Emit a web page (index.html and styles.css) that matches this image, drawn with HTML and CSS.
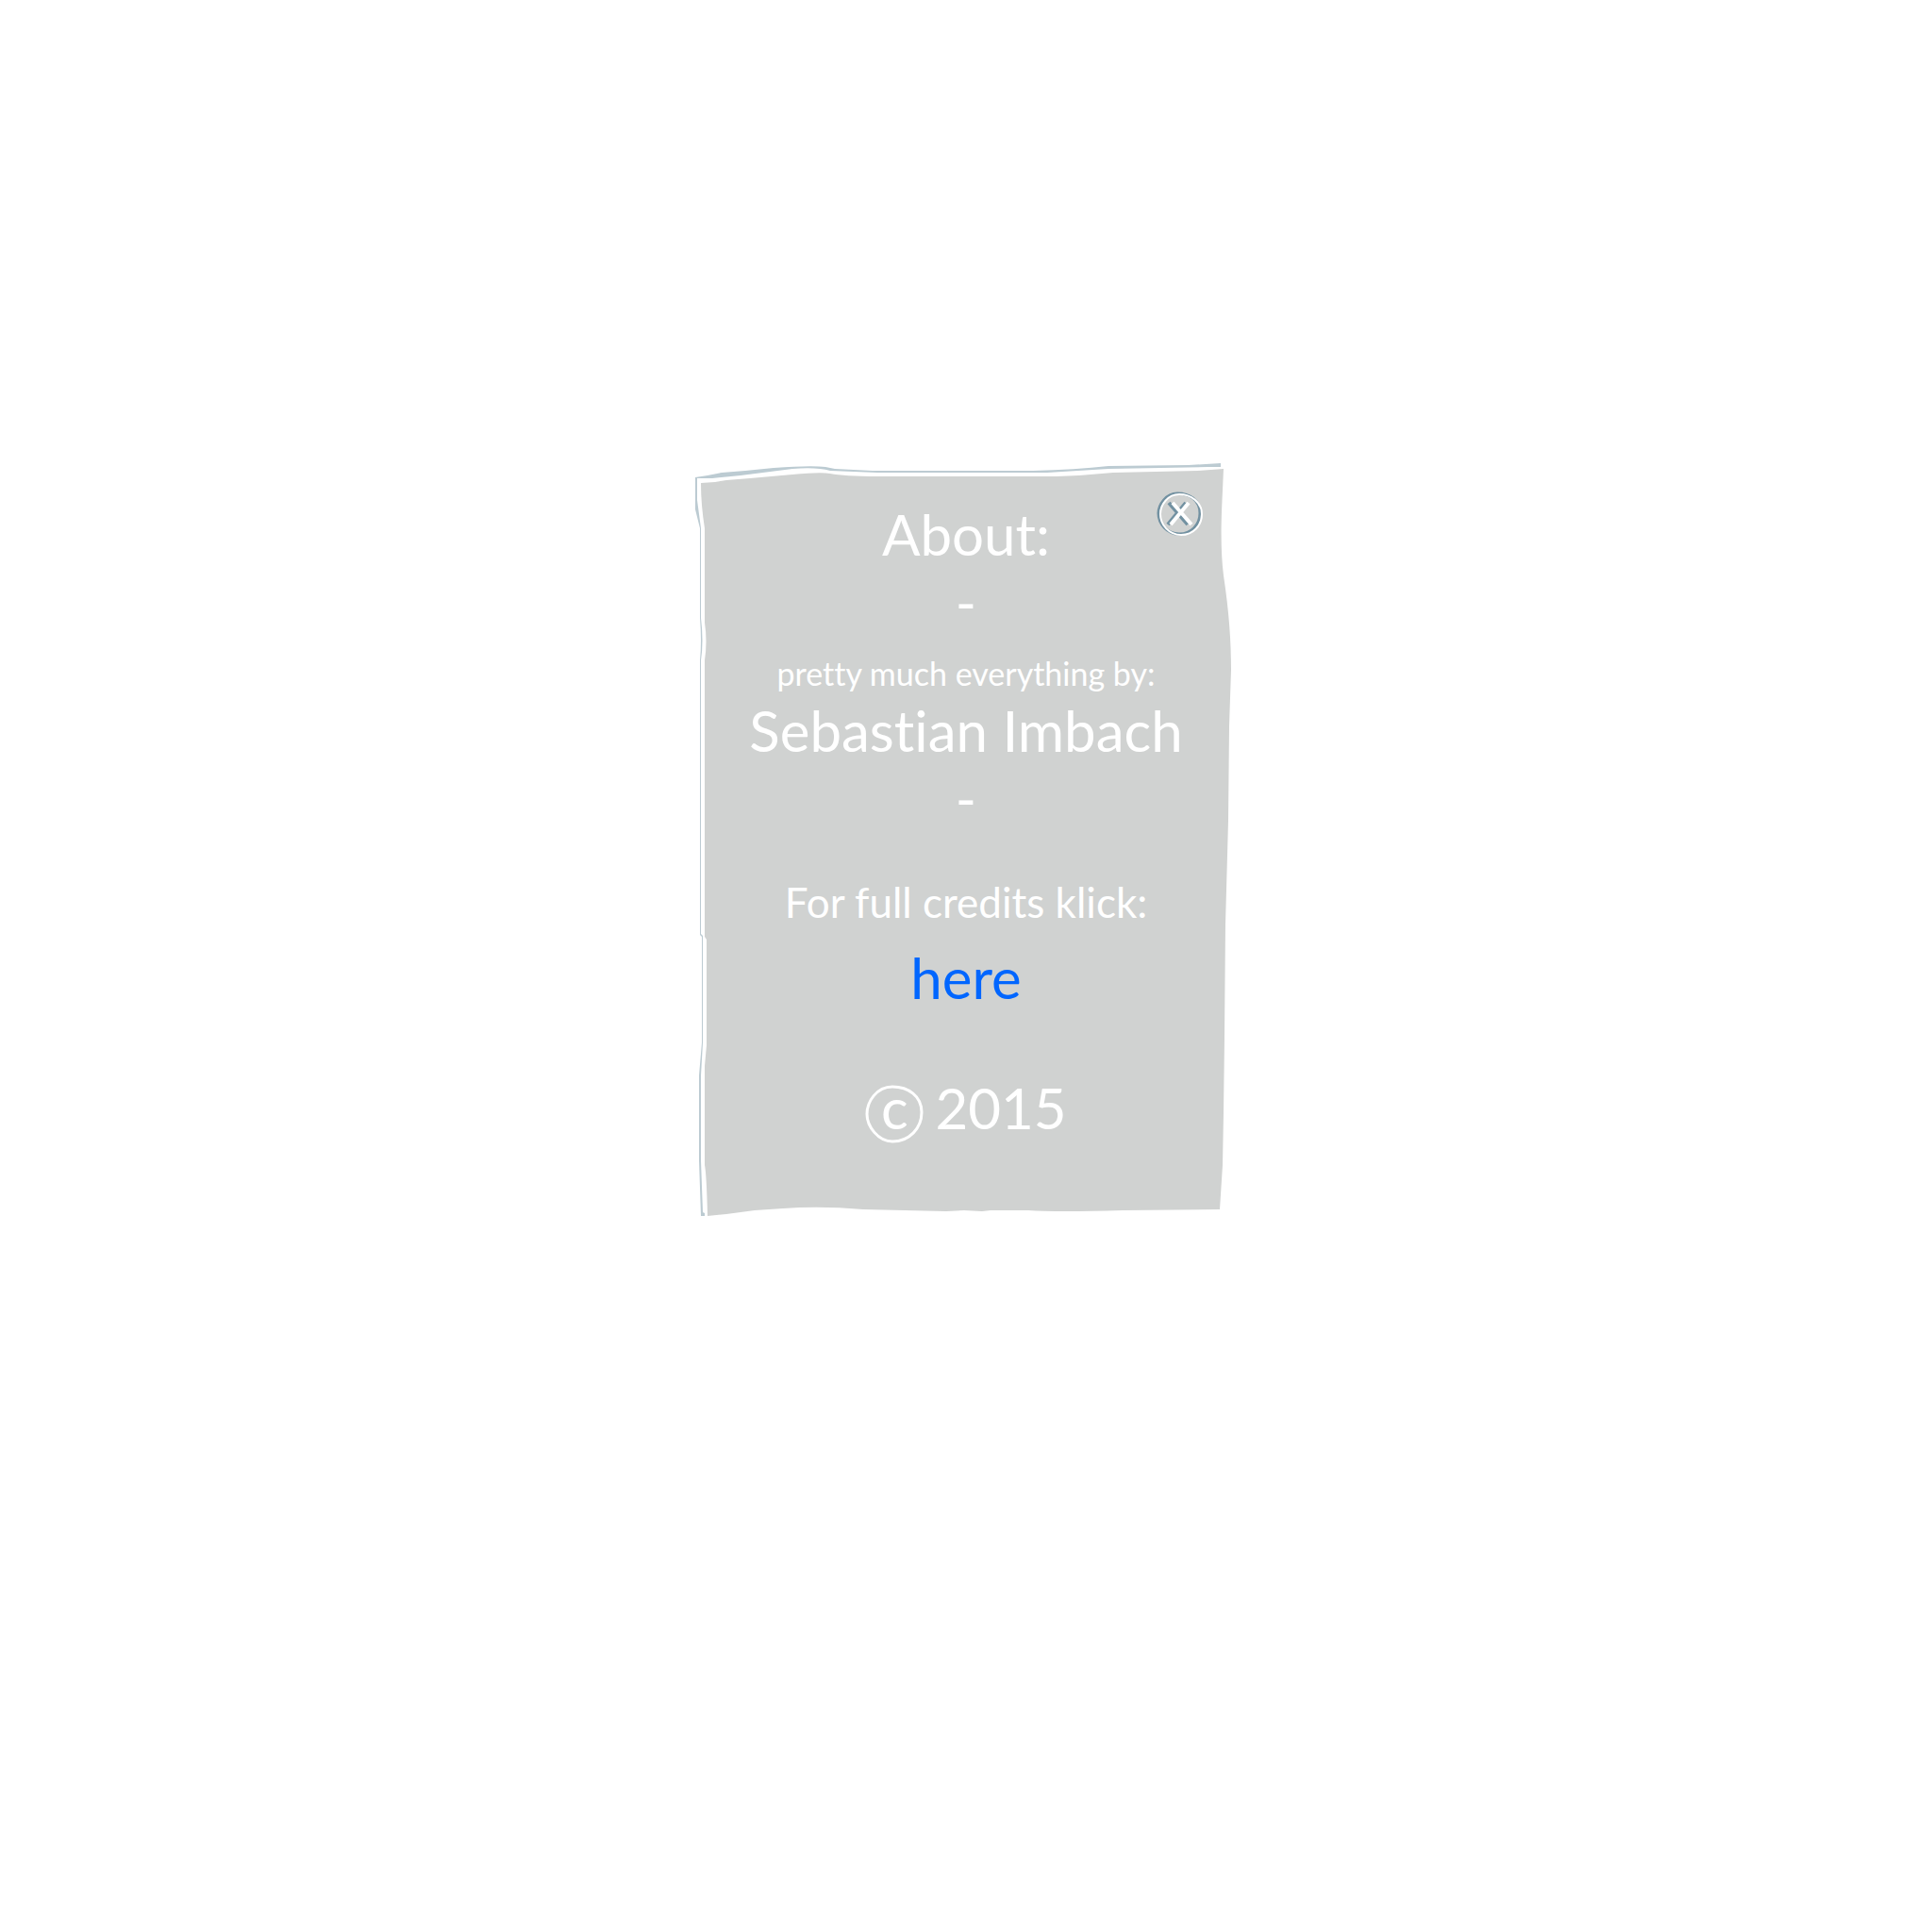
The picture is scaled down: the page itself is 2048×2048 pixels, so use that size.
FILE: index.html
```html
<!DOCTYPE html>
<html lang="en">
<head>
<meta charset="utf-8">
<meta name="viewport" content="width=device-width, initial-scale=1">
<title>About</title>
<link rel="stylesheet" href="styles.css">
</head>
<body>
<main class="panel">
  <svg class="paper" viewBox="736 490 576 800" preserveAspectRatio="none" aria-hidden="true">
    <path fill="#d0d2d1" d="M743 512 L758 511 L770 509 L795 507 L840 503 Q870 500 880 502 Q895 505 930 505 L1120 505 Q1150 504 1180 501 L1270 499 L1297 497 L1296 520 C1294 560 1294 585 1297 610 C1303 650 1305 680 1305 710 L1303 770 L1302 870 L1299 980 L1298 1100 L1297 1180 L1296 1235 L1293 1282 L1190 1283 Q1120 1285 1090 1283 L1050 1283 L1041 1284 L1022 1283 L1003 1284 L915 1282 Q870 1278 830 1281 L800 1283 L770 1287 L750 1289 Q749 1245 747 1235 L747 1130 L749 1108 L749 996 L747 993 L747 700 Q750 680 747 660 L747 560 Q743 535 743 512 Z"/>
    <path fill="#bccbd2" d="M737 506 L750 504 L765 501 L790 499 L820 496 Q860 493 875 495 L885 497 L925 499 L1095 499 Q1140 498 1175 494 L1260 493 L1294 491 L1294 495 L1280 495 L1175 497 L1110 501 L930 501 L880 499 Q866 495 840 497 L785 504 L755 507 L739 507 L739 530 L743 560 L743 655 Q746 680 743 700 L743 990 L745 992 L745 1105 L743 1140 L743 1230 L745 1285 L747 1286 L747 1289 L743 1289 L741 1230 L741 1140 L744 1105 L744 993 L742 991 L742 700 Q744 680 742 655 L742 560 L737 540 Z"/>
  </svg>
  <button class="close" type="button" aria-label="Close">
    <svg viewBox="0 0 50 50" aria-hidden="true">
      <g fill="none" stroke="#7291a1" stroke-width="3">
        <path d="M22 3 C10 3 2 15 2 24 C2 35 11 46 24 46 C37 46 46 36 46 24 C46 10 35 3 22 3 Z"/>
        <path d="M13 13 L33 36 M31 13 L12 36" stroke-width="4"/>
      </g>
      <g fill="none" stroke="#ffffff" stroke-width="2">
        <path d="M24 4 C12 4 4 15 4 25 C4 36 13 47 26 47 C39 47 48 37 48 25 C48 12 36 4 24 4 Z"/>
        <path d="M17 13 L37 36 M34 13 L15 36" stroke-width="4"/>
      </g>
    </svg>
  </button>
  <h1 class="large">About:</h1>
  <p class="dash">-</p>
  <p class="small">pretty much everything by:</p>
  <p class="large">Sebastian Imbach</p>
  <p class="dash">-</p>
  <p class="medium">For full credits klick:</p>
  <a class="large link" href="#credits">here</a>
  <p class="large copyright">
    <span class="mark">
      <svg class="ring" viewBox="0 0 62 62" aria-hidden="true"><path d="M29 2 C12 2 2 18 2 31 C2 44 14 60 29 60 C47 60 60 46 60 29 C60 12 46 2 29 2 Z" fill="none" stroke="#ffffff" stroke-width="3"/></svg>
      <span>c</span>
    </span>
    <span>2015</span>
  </p>
</main>
</body>
</html>
```
FILE: styles.css
```css
body {
  margin: 0;
  padding: 490px 16px;
  background: #ffffff;
  color: #ffffff;
  font-family: Lato, sans-serif;
  font-weight: 400;
  font-variant-ligatures: none;
}

.panel {
  position: relative;
  isolation: isolate;
  box-sizing: border-box;
  max-width: 576px;
  margin: 0 auto;
  padding: 36px 0 76px;
  display: flex;
  flex-direction: column;
  align-items: center;
  text-align: center;
}

.paper {
  position: absolute;
  inset: 0;
  z-index: -1;
  width: 100%;
  height: 100%;
}

.close {
  position: absolute;
  top: 30px;
  right: 36px;
  width: 50px;
  height: 50px;
  padding: 0;
  border: 0;
  background: none;
  cursor: pointer;
}

.close svg {
  display: block;
}

h1,
p {
  margin: 0;
  font-weight: inherit;
}

.large {
  font-size: 60px;
  line-height: 80px;
}

.dash {
  font-size: 60px;
  line-height: 64px;
}

.small {
  margin-top: 24px;
  font-size: 34px;
  line-height: 40px;
}

.medium {
  margin-top: 50px;
  font-size: 44px;
  line-height: 56px;
}

.link {
  margin-top: 12px;
  color: #0066ff;
  text-decoration: none;
}

.copyright {
  margin-top: 58px;
  display: flex;
  align-items: center;
  gap: 12px;
}

.mark {
  position: relative;
  width: 62px;
}

.ring {
  position: absolute;
  top: 16px;
  left: 0;
  width: 62px;
  height: 62px;
}
```
